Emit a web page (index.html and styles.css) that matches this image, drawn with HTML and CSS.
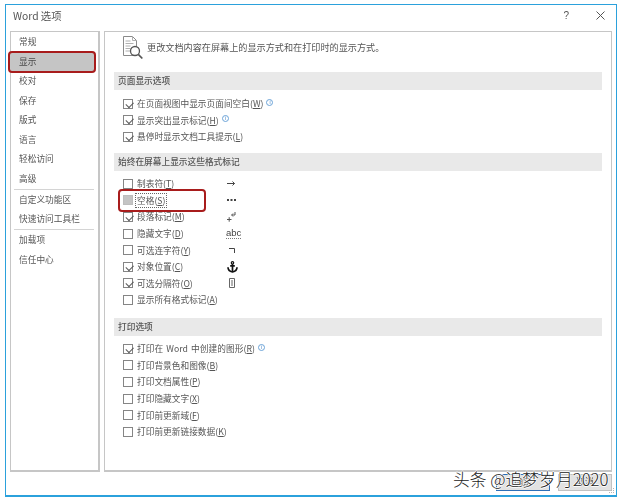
FILE: index.html
```html
<!DOCTYPE html>
<html lang="zh">
<head>
<meta charset="utf-8">
<title>Word 选项</title>
<link rel="stylesheet" href="styles.css">
</head>
<body>
<div class="dialog">
  <header class="titlebar">
    <span class="title">Word 选项</span>
    <span class="help">?</span>
    <svg class="close" width="9" height="9" viewBox="0 0 9 9"><path d="M.5.5l8 8M8.5.5l-8 8" stroke="#555" fill="none"/></svg>
  </header>
  <div class="content">
    <nav class="sidebar">
      <div class="nav-item">常规</div>
      <div class="nav-item selected">显示</div>
      <div class="nav-item">校对</div>
      <div class="nav-item">保存</div>
      <div class="nav-item">版式</div>
      <div class="nav-item">语言</div>
      <div class="nav-item">轻松访问</div>
      <div class="nav-item">高级</div>
      <div class="nav-sep"></div>
      <div class="nav-item">自定义功能区</div>
      <div class="nav-item">快速访问工具栏</div>
      <div class="nav-sep"></div>
      <div class="nav-item">加载项</div>
      <div class="nav-item">信任中心</div>
    </nav>
    <main class="panel">
      <div class="intro">
        <svg class="doc-icon" width="20" height="24" viewBox="0 0 20 24">
          <path d="M.5.5h9l4 4v15H.5z" fill="#fff" stroke="#8a8a8a"/>
          <path d="M9.500.5v4h4M2.500 5h5M2.500 7.500h8M2.500 10h5M2.500 12.500h5M2.500 15h5" fill="none" stroke="#b0b0b0"/>
          <circle cx="12" cy="15" r="4.500" fill="#fff" stroke="#555" stroke-width="1.300"/>
          <path d="M15.300 18.300l4 4.200" stroke="#555" stroke-width="1.700"/>
        </svg>
        <span>更改文档内容在屏幕上的显示方式和在打印时的显示方式。</span>
      </div>

      <h2 class="section">页面显示选项</h2>
      <div class="options first">
        <label class="opt"><i class="box on"></i><span>在页面视图中显示页面间空白(<u>W</u>)</span><b class="info">i</b></label>
        <label class="opt"><i class="box on"></i><span>显示突出显示标记(<u>H</u>)</span><b class="info">i</b></label>
        <label class="opt"><i class="box on"></i><span>悬停时显示文档工具提示(<u>L</u>)</span></label>
      </div>

      <h2 class="section">始终在屏幕上显示这些格式标记</h2>
      <div class="options marks">
        <label class="opt"><i class="box"></i><span class="name">制表符(<u>T</u>)</span>
          <svg class="mark" width="9" height="7" viewBox="0 0 9 7"><path d="M0 3.500h7.500M5.500 1.500l2 2-2 2" fill="none" stroke="#444"/></svg></label>
        <label class="opt"><i class="box gray"></i><span class="name"><span class="focus">空格(<u>S</u>)</span></span>
          <svg class="mark" width="9" height="3" viewBox="0 0 9 3"><path d="M0 0h2v2H0zM3.500 0h2v2h-2zM7 0h2v2H7z" fill="#444"/></svg>
          <span class="red-box"></span></label>
        <label class="opt"><i class="box on"></i><span class="name">段落标记(<u>M</u>)</span>
          <svg class="mark" width="9" height="10" viewBox="0 0 9 10"><path d="M8 0v3H5M6 1.500L4.500 3 6 4.500M0 7.500h4.500M2.200 5.200v4.500" fill="none" stroke="#555"/></svg></label>
        <label class="opt"><i class="box"></i><span class="name">隐藏文字(<u>D</u>)</span>
          <span class="mark glyph">abc</span></label>
        <label class="opt"><i class="box"></i><span class="name">可选连字符(<u>Y</u>)</span>
          <svg class="mark hyphen" width="6" height="5" viewBox="0 0 6 5"><path d="M0 .500h5.500V5" fill="none" stroke="#444"/></svg></label>
        <label class="opt"><i class="box on"></i><span class="name">对象位置(<u>C</u>)</span>
          <svg class="mark" width="11" height="12" viewBox="0 0 11 12"><circle cx="5.500" cy="1.800" r="1.200" fill="none" stroke="#111" stroke-width="1.200"/><path d="M5.500 3v8M3.200 4.800h4.600M1 6.200c0 3 2.300 4.300 4.500 4.800 2.200-.5 4.500-1.800 4.500-4.800" fill="none" stroke="#111" stroke-width="1.700"/></svg></label>
        <label class="opt"><i class="box on"></i><span class="name">可选分隔符(<u>O</u>)</span>
          <svg class="mark breaker" width="6" height="10" viewBox="0 0 6 10"><path d="M.5.500h5v9h-5zM3 2v6" fill="none" stroke="#666"/></svg></label>
        <label class="opt"><i class="box"></i><span>显示所有格式标记(<u>A</u>)</span></label>
      </div>

      <h2 class="section">打印选项</h2>
      <div class="options">
        <label class="opt"><i class="box on"></i><span class="latin-gap">打印在 Word 中创建的图形(<u>R</u>)</span><b class="info">i</b></label>
        <label class="opt"><i class="box"></i><span>打印背景色和图像(<u>B</u>)</span></label>
        <label class="opt"><i class="box"></i><span>打印文档属性(<u>P</u>)</span></label>
        <label class="opt"><i class="box"></i><span>打印隐藏文字(<u>X</u>)</span></label>
        <label class="opt"><i class="box"></i><span>打印前更新域(<u>F</u>)</span></label>
        <label class="opt"><i class="box"></i><span>打印前更新链接数据(<u>K</u>)</span></label>
      </div>
    </main>
  </div>
  <footer class="footer">
    <button class="btn primary">确定</button>
    <button class="btn">取消</button>
    <svg class="grip" width="6" height="6" viewBox="0 0 6 6"><path d="M4 0h1v1H4zM2 2h1v1H2zM4 2h1v1H4zM0 4h1v1H0zM2 4h1v1H2zM4 4h1v1H4z" fill="#b5b5b5"/></svg>
  </footer>
</div>
<div class="watermark">头条 @追梦岁月2020</div>
</body>
</html>
```
FILE: styles.css
```css
* { box-sizing: border-box; }
html, body { margin: 0; background: #fff; }
body {
  position: relative;
  width: 621px;
  height: 500px;
  overflow: hidden;
  padding: 4px 4px 3px 5px;
  font-family: "Noto Sans CJK SC", "Liberation Sans", sans-serif;
  font-size: 8.7px;
  color: #555;
}
.dialog {
  height: 493px;
  border: 1px solid #2ba1dc;
  border-bottom-width: 2px;
  display: flex;
  flex-direction: column;
  background: #fff;
  filter: blur(.45px);
}
.titlebar {
  height: 26px;
  flex: none;
  display: flex;
  align-items: center;
  padding: 0 11px 6px 7px;
}
.title { font-size: 10.300px; flex: 1; color: #555; }
.help { font-size: 10px; font-family: "Liberation Sans", sans-serif; margin-right: 27px; }
.content {
  height: 441px;
  flex: none;
  display: flex;
  gap: 4px;
  padding: 0 4px;
}
.sidebar {
  width: 90px;
  border: 1px solid #c6c6c6;
  border-right-width: 2px;
  border-bottom-width: 2px;
  padding: 0 3px 0 0;
  display: flex;
  flex-direction: column;
}
.nav-item {
  height: 19.500px;
  line-height: 19.500px;
  padding-left: 8px;
  flex: none;
  position: relative;
}
.nav-item.selected {
  background: #c5c5c5;
  color: #4a4a4a;
}
.nav-item.selected::after {
  content: "";
  position: absolute;
  left: -3px;
  right: -1px;
  top: -1px;
  bottom: -2px;
  border: 2px solid #a81c1c;
  border-radius: 4px;
}
.nav-sep {
  height: 1px;
  margin: .5px 1px 0 3px;
  background: #d4d4d4;
  flex: none;
}
.panel {
  flex: 1;
  border: 1px solid #c6c6c6;
  border-bottom-width: 2px;
  padding: 0 9px 0 9px;
}
.intro {
  height: 40px;
  display: flex;
  align-items: flex-start;
  gap: 4px;
  padding: 4px 0 0 9px;
  font-size: 9.150px;
  color: #555;
}
.intro span { line-height: 24px; margin-top: -1px; }
.doc-icon { flex: none; }
.section {
  height: 18px;
  line-height: 18px;
  margin: 0;
  padding-left: 4px;
  background: #e9e9e9;
  font-size: 8.700px;
  font-weight: 500;
  color: #555;
}
.options { padding: 4.500px 0 0 9px; height: 63px; }
.options.first { padding-top: 5.500px; }
.options.marks { height: 147px; }
.options:last-child { height: auto; }
.opt {
  height: 16.600px;
  display: flex;
  align-items: center;
  position: relative;
}
.latin-gap { word-spacing: 1px; letter-spacing: .05px; }
.box {
  width: 10px;
  height: 10px;
  flex: none;
  border: 1px solid #858585;
  margin-right: 4px;
  background: #fff;
  position: relative;
}
.box.on::after {
  content: "";
  position: absolute;
  left: 1.500px;
  top: 0;
  width: 6px;
  height: 3.500px;
  border-left: 1px solid #5a5a5a;
  border-bottom: 1px solid #5a5a5a;
  transform: translate(0, 1.500px) rotate(-45deg);
}
.box.gray { background: #c4c4c4; border-color: #bdbdbd; }
.info {
  width: 7px;
  height: 7px;
  margin-left: 3px;
  margin-top: -3px;
  border: 1px solid #6ba3d8;
  border-radius: 50%;
  color: #3d7fc4;
  font: 400 5px/5px "Liberation Sans", sans-serif;
  text-align: center;
}
.name { width: 90px; flex: none; }
.focus {
  display: inline-block;
  line-height: 13px;
  outline: 1px dotted #666;
  padding: 0 1px;
  margin-left: -1px;
}
.mark { flex: none; }
.hyphen { margin-left: 2px; }
.breaker { margin-left: 2px; }
.glyph {
  font: 9.500px/1 "Liberation Sans", sans-serif;
  color: #444;
  margin-left: -1px;
  border-bottom: 1px dotted #777;
}
.red-box {
  position: absolute;
  left: -5px;
  top: -3px;
  width: 87.500px;
  height: 23px;
  border: 2px solid #a81c1c;
  border-radius: 4px;
}
.footer {
  flex: 1;
  display: flex;
  justify-content: flex-end;
  align-items: flex-start;
  gap: 8px;
  padding: 2px 4px 0 0;
  position: relative;
}
.btn {
  width: 54px;
  height: 17px;
  padding: 0;
  font: 8.700px/1 "Noto Sans CJK SC", sans-serif;
  color: #555;
  background: #e2e2e2;
  border: 1px solid #c2c2c2;
}
.btn.primary { border-color: #2c6fb8; }
.grip { position: absolute; right: 1px; bottom: 1px; }
.watermark {
  position: absolute;
  left: 453px;
  top: 468px;
  width: 160px;
  font-size: 16.800px;
  font-weight: 300;
  line-height: 22px;
  color: #222;
  white-space: nowrap;
  text-shadow: .7px 0 #fff, -.7px 0 #fff, 0 .7px #fff, 0 -.7px #fff;
}
```
